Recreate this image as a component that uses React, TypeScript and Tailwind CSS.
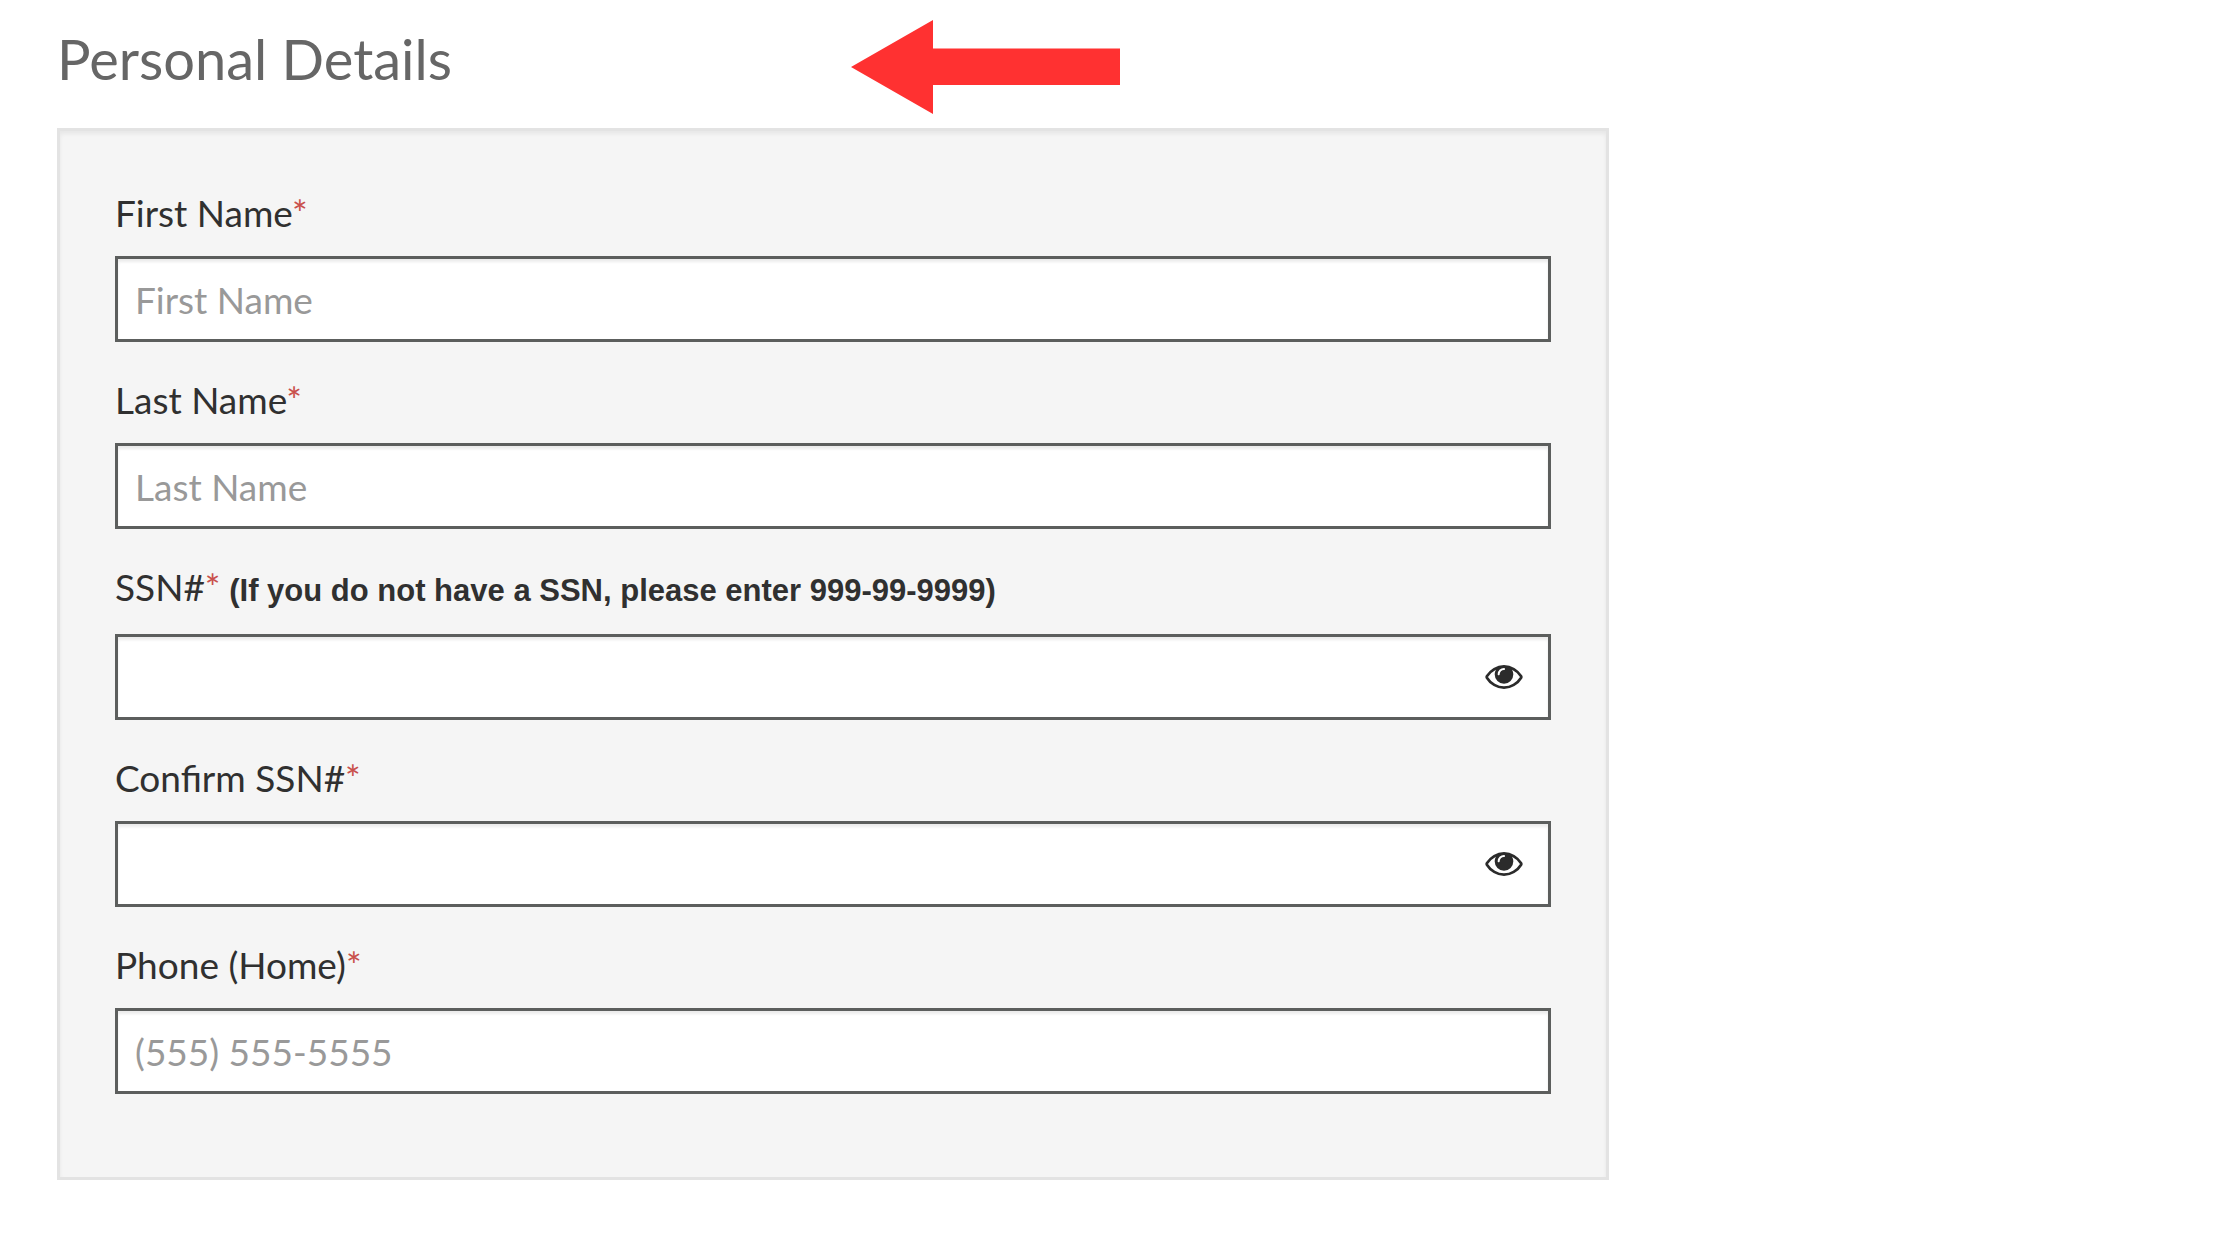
import React, { useState } from 'react';

interface FieldProps {
    id: string;
    label: string;
    placeholder?: string;
    type?: string;
    hint?: string;
    secret?: boolean;
}

const EyeIcon: React.FC<{ className?: string }> = ({ className }) => (
    <svg viewBox="0 384 1792 1152" fill="currentColor" className={className} aria-hidden="true">
        <path d="M1664 960q-152-236-381-353 61 104 61 225 0 185-131.5 316.5t-316.5 131.5-316.5-131.5-131.5-316.5q0-121 61-225-229 117-381 353 133 205 333.5 326.5t434.5 121.5 434.5-121.5 333.5-326.5zm-720-384q0-20-14-34t-34-14q-125 0-214.5 89.500t-89.500 214.500q0 20 14 34t34 14 34-14 14-34q0-86 61-147t147-61q20 0 34-14t14-34zm848 384q0 34-20 69-140 230-376.500 368.500t-499.500 138.500-499.500-139-376.500-368q-20-35-20-69t20-69q140-229 376.500-368t499.500-139 499.500 139 376.500 368q20 35 20 69z" />
    </svg>
);

const ArrowLeft: React.FC<{ className?: string }> = ({ className }) => (
    <svg viewBox="0 0 269 94" fill="#ff3131" className={className} aria-hidden="true">
        <path d="M0 47 82 0v28.500h187V65H82v29z" />
    </svg>
);

const Field: React.FC<FieldProps> = ({ id, label, placeholder, type = 'text', hint, secret }) => {
    const [visible, setVisible] = useState(false);

    return (
        <div>
            <label htmlFor={id} className={`block text-[37px] leading-[46px] text-[#303030] ${hint ? 'mb-6' : 'mb-5'}`}>
                {label}
                <span className="text-[#c9504c]">*</span>
                {hint && <strong className="font-['Liberation_Sans',Arial,sans-serif] text-[31px] leading-none font-bold"> {hint}</strong>}
            </label>
            <div className="relative">
                <input
                    id={id}
                    type={secret && !visible ? 'password' : type}
                    placeholder={placeholder}
                    className={`block h-[86px] w-full border-3 border-[#5c5e5d] bg-white pl-[17px] text-[37px] text-[#303030] shadow-[inset_0_3px_3px_rgba(0,0,0,0.08)] outline-none placeholder:text-[#999999] ${secret ? 'pr-24' : 'pr-[17px]'}`}
                />
                {secret && (
                    <button
                        type="button"
                        aria-label={`Show ${label}`}
                        onClick={() => setVisible(!visible)}
                        className="absolute inset-y-0 right-7 flex items-center text-[#2b2b2b]"
                    >
                        <EyeIcon className="h-6 w-[38px]" />
                    </button>
                )}
            </div>
        </div>
    );
};

const fields: FieldProps[] = [
    { id: 'first-name', label: 'First Name', placeholder: 'First Name' },
    { id: 'last-name', label: 'Last Name', placeholder: 'Last Name' },
    { id: 'ssn', label: 'SSN#', hint: '(If you do not have a SSN, please enter 999-99-9999)', secret: true },
    { id: 'confirm-ssn', label: 'Confirm SSN#', secret: true },
    { id: 'phone-home', label: 'Phone (Home)', placeholder: '(555) 555-5555', type: 'tel' },
];

const App: React.FC = () => (
    <main className="min-h-screen bg-white px-[57px] pt-5 font-[Lato,sans-serif]">
        <div className="max-w-[1552px]">
            <header className="mb-3.5 grid grid-cols-2 items-start gap-9">
                <h1 className="text-[56px] leading-[78px] text-[#666666]">Personal Details</h1>
                <ArrowLeft className="h-[94px] w-[269px]" />
            </header>
            <form className="flex flex-col gap-[35px] border-3 border-[#e3e3e3] bg-[#f5f5f5] px-[55px] pt-[59px] pb-[83px] shadow-[inset_0_3px_4px_rgba(0,0,0,0.06)]">
                {fields.map(f => <Field key={f.id} {...f} />)}
            </form>
        </div>
    </main>
);

export default App;
